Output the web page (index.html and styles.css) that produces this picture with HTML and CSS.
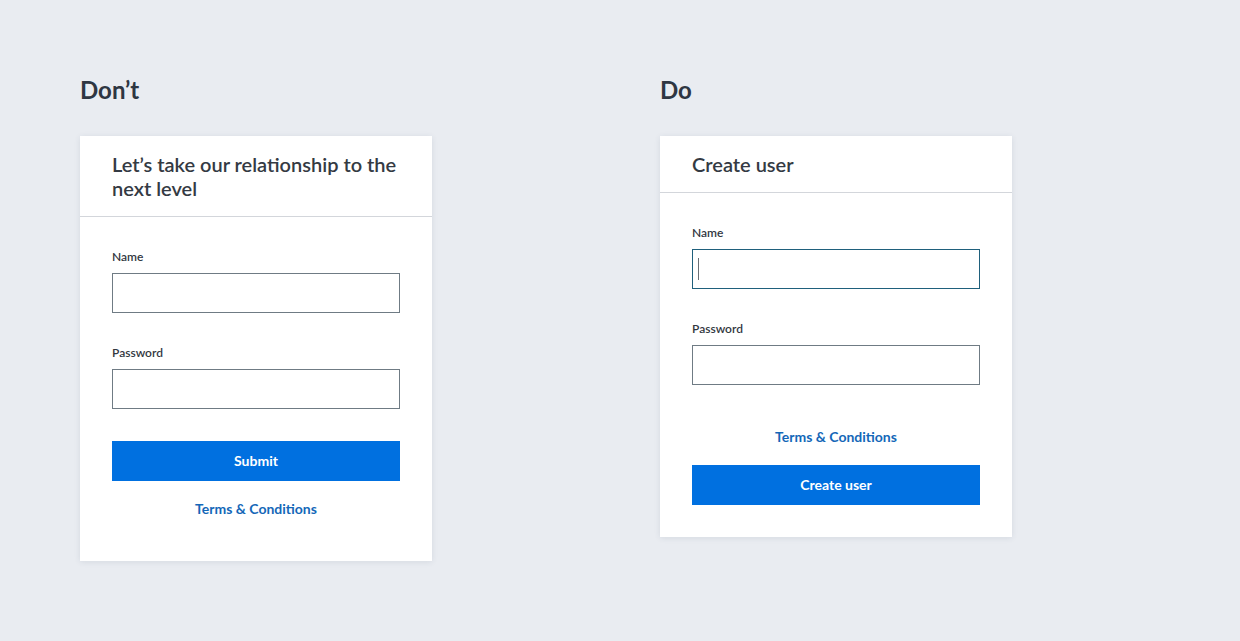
FILE: index.html
```html
<!DOCTYPE html>
<html lang="en">
<head>
<meta charset="utf-8">
<title>Don't / Do</title>
<link rel="stylesheet" href="styles.css">
</head>
<body>
<main class="page">
  <section class="example">
    <h2 class="example-title">Don’t</h2>
    <div class="card">
      <div class="card-header">
        <h3 class="card-title">Let’s take our relationship to the next level</h3>
      </div>
      <form class="card-body">
        <label class="field">
          <span class="field-label">Name</span>
          <span class="input"></span>
        </label>
        <label class="field">
          <span class="field-label">Password</span>
          <span class="input"></span>
        </label>
        <button type="button" class="btn">Submit</button>
        <a class="link link-after">Terms &amp; Conditions</a>
      </form>
    </div>
  </section>
  <section class="example">
    <h2 class="example-title">Do</h2>
    <div class="card">
      <div class="card-header">
        <h3 class="card-title">Create user</h3>
      </div>
      <form class="card-body card-body-do">
        <label class="field">
          <span class="field-label">Name</span>
          <span class="input input-focus"><span class="caret"></span></span>
        </label>
        <label class="field">
          <span class="field-label">Password</span>
          <span class="input"></span>
        </label>
        <a class="link link-before">Terms &amp; Conditions</a>
        <button type="button" class="btn">Create user</button>
      </form>
    </div>
  </section>
</main>
</body>
</html>
```
FILE: styles.css
```css
* { box-sizing: border-box; }
html, body {
  margin: 0;
  padding: 0;
}
body {
  background: #e9ecf1;
  font-family: Lato, "Open Sans", "Liberation Sans", sans-serif;
  color: #343a42;
  width: 1240px;
  height: 641px;
  overflow: hidden;
}
.page {
  display: flex;
  gap: 228px;
  padding: 76px 0 0 80px;
}
.example {
  width: 352px;
  display: flex;
  flex-direction: column;
}
.example-title {
  margin: 0 0 32px;
  font-size: 24px;
  line-height: 28px;
  font-weight: 700;
  color: #2e3642;
}
.card {
  background: #fff;
  box-shadow: 0 1px 6px rgba(40, 60, 90, 0.10);
}
.card-header {
  padding: 16px 32px 16px;
  border-bottom: 1px solid #d3d6db;
}
.card-title {
  margin: 0;
  font-size: 20px;
  line-height: 24px;
  font-weight: 600;
  color: #343a43;
}
.card-body {
  display: flex;
  flex-direction: column;
  padding: 32px 32px 40px;
}
.card-body-do {
  padding-bottom: 32px;
}
.field {
  display: flex;
  flex-direction: column;
  gap: 8px;
  margin-bottom: 32px;
}
.field-label {
  font-size: 12px;
  line-height: 16px;
  font-weight: 600;
  color: #33383f;
}
.input {
  display: flex;
  align-items: center;
  height: 40px;
  border: 1px solid #6f7b84;
  background: #fff;
  padding-left: 5px;
}
.input-focus {
  border-color: #1f607c;
}
.caret {
  width: 1px;
  height: 22px;
  background: #6a6f75;
}
.btn {
  height: 40px;
  border: 0;
  margin: 0;
  background: #0070e0;
  color: #fff;
  font-family: inherit;
  font-size: 14px;
  line-height: 20px;
  font-weight: 700;
  padding: 0 0 1px;
}
.link {
  display: block;
  text-align: center;
  font-size: 14px;
  line-height: 24px;
  font-weight: 700;
  color: #1467b8;
  text-decoration: none;
}
.link-after {
  margin-top: 16px;
}
.link-before {
  margin-top: 8px;
  margin-bottom: 16px;
}
```
